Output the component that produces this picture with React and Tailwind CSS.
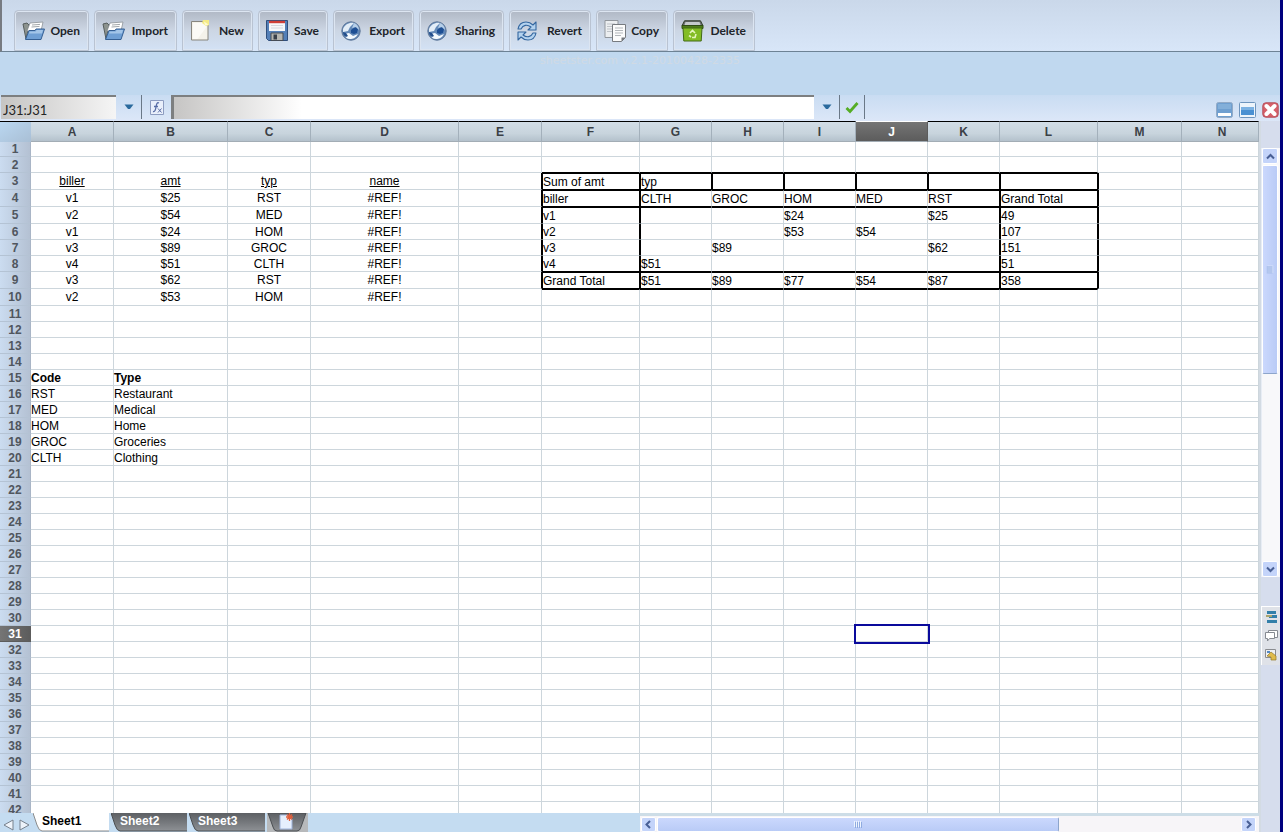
const tools = [
  { label: 'Open', icon: FolderIcon, size: 'w-[75px]' },
  { label: 'Import', icon: FolderIcon, size: 'w-[83px]' },
  { label: 'New', icon: PageIcon, size: 'w-[71px]' },
  { label: 'Save', icon: DiskIcon, size: 'w-[70px]' },
  { label: 'Export', icon: GlobeIcon, size: 'w-[81px]' },
  { label: 'Sharing', icon: GlobeIcon, size: 'w-[85px]' },
  { label: 'Revert', icon: RevertIcon, size: 'w-[82px]' },
  { label: 'Copy', icon: CopyIcon, size: 'w-[72px]' },
  { label: 'Delete', icon: BinIcon, size: 'w-[82px]' },
]

const columns = [
  { name: 'A', size: 'w-[83px]' },
  { name: 'B', size: 'w-[114px]' },
  { name: 'C', size: 'w-[83px]' },
  { name: 'D', size: 'w-[148px]' },
  { name: 'E', size: 'w-[83px]' },
  { name: 'F', size: 'w-[98px]' },
  { name: 'G', size: 'w-[72px]' },
  { name: 'H', size: 'w-[72px]' },
  { name: 'I', size: 'w-[72px]' },
  { name: 'J', size: 'w-[72px]' },
  { name: 'K', size: 'w-[72px]' },
  { name: 'L', size: 'w-[98px]' },
  { name: 'M', size: 'w-[84px]' },
  { name: 'N', size: 'pl-1' },
]

const rowData = {
  3: { A: 'biller', B: 'amt', C: 'typ', D: 'name', F: 'Sum of amt', G: 'typ' },
  4: { A: 'v1', B: '$25', C: 'RST', D: '#REF!', F: 'biller', G: 'CLTH', H: 'GROC', I: 'HOM', J: 'MED', K: 'RST', L: 'Grand Total' },
  5: { A: 'v2', B: '$54', C: 'MED', D: '#REF!', F: 'v1', I: '$24', K: '$25', L: '49' },
  6: { A: 'v1', B: '$24', C: 'HOM', D: '#REF!', F: 'v2', I: '$53', J: '$54', L: '107' },
  7: { A: 'v3', B: '$89', C: 'GROC', D: '#REF!', F: 'v3', H: '$89', K: '$62', L: '151' },
  8: { A: 'v4', B: '$51', C: 'CLTH', D: '#REF!', F: 'v4', G: '$51', L: '51' },
  9: { A: 'v3', B: '$62', C: 'RST', D: '#REF!', F: 'Grand Total', G: '$51', H: '$89', I: '$77', J: '$54', K: '$87', L: '358' },
  10: { A: 'v2', B: '$53', C: 'HOM', D: '#REF!' },
  15: { A: 'Code', B: 'Type' },
  16: { A: 'RST', B: 'Restaurant' },
  17: { A: 'MED', B: 'Medical' },
  18: { A: 'HOM', B: 'Home' },
  19: { A: 'GROC', B: 'Groceries' },
  20: { A: 'CLTH', B: 'Clothing' },
}

const rowNumbers = Array.from({ length: 42 }, (_, i) => i + 1)
const tallRows = [3, 4, 5, 9, 10]

function rowHeight(row) {
  if (row === 1) return 'h-[15px]'
  return tallRows.includes(row) ? 'h-[17px]' : 'h-4'
}

// heavy rule on the left edge of a pivot cell
function heavyLeft(row, col) {
  if (row < 3 || row > 9) return false
  if (col === 'F' || col === 'G' || col === 'L' || col === 'M') return true
  return row === 3 && 'HIJK'.includes(col)
}

// heavy rule on the top edge of a pivot cell
function heavyTop(row, col) {
  return [3, 4, 5, 9, 10].includes(row) && 'FGHIJKL'.includes(col)
}

function cellClass(row, col) {
  const next = String.fromCharCode(col.charCodeAt(0) + 1)
  const c = ['relative overflow-visible whitespace-nowrap p-0 leading-[14px]']
  c.push(heavyLeft(row, next) ? 'border-r border-r-black' : 'border-r border-r-[#cdd6dc]')
  c.push(heavyTop(row + 1, col) ? 'border-b border-b-black' : 'border-b border-b-[#cdd6dc]')
  if (heavyLeft(row, col)) c.push('border-l border-l-black')
  if (heavyTop(row, col)) c.push('border-t border-t-black')
  if (row <= 10 && 'ABCD'.includes(col)) c.push('text-center')
  if (row === 3 && 'ABCD'.includes(col)) c.push('underline')
  if (row === 15) c.push('font-bold')
  return c.join(' ')
}

function FolderIcon() {
  return (
    <svg width="23" height="20" viewBox="0 0 23 20">
      <path d="M1 3l4-1 2 2-3 14z" fill="#8d938e" stroke="#555d5c" />
      <path d="M8 2l13-1-2 9H5z" fill="#fff" stroke="#8a9196" strokeWidth=".8" />
      <path d="M10 4l8-.6M9.500 6l8-.6" stroke="#8b9094" strokeWidth=".8" />
      <path d="M7 9.500h6l1-1.500h8.500l-3.500 10.500H3.500z" fill="#6f9fd4" stroke="#355f93" />
      <path d="M7.600 10.500h6l1-1.500h6.400l-1 3.500H7z" fill="#a3c5e8" />
    </svg>
  )
}

function PageIcon() {
  return (
    <svg width="20" height="21" viewBox="0 0 20 21">
      <path d="M1.500 1.500h13l3.500 3v15.500H1.500z" fill="#f4f2ea" stroke="#88867f" />
      <path d="M3 3h10l3.500 4-9 12H3z" fill="#fbfaf6" />
      <path d="M13 0h6v5l-3 1-4-3z" fill="#f5eb86" />
      <path d="M14 1.500l1 4 3.500-1z" fill="#fffbd0" />
    </svg>
  )
}

function DiskIcon() {
  return (
    <svg width="22" height="21" viewBox="0 0 22 21">
      <path d="M.5.5h21v20H2.500l-2-2z" fill="#5480b8" stroke="#304f7d" />
      <path d="M3 1h16v10H3z" fill="#f7f8fa" />
      <path d="M3 .8h16v2.400H3z" fill="#cf3f38" />
      <path d="M5 5.500h12M5 8h12" stroke="#d4d8df" />
      <path d="M5 13h12v7.500H5z" fill="#b5b5b0" stroke="#464c55" />
      <path d="M7.500 14.500h3.500v5H7.500z" fill="#39404a" />
    </svg>
  )
}

function GlobeIcon() {
  return (
    <svg width="20" height="20" viewBox="0 0 20 20">
      <circle cx="10" cy="10" r="9.200" fill="#6389b8" stroke="#5d7596" />
      <path d="M2 8c2-5 7-7 11-6l-4 4-2 4-5 1z" fill="#e3edf7" />
      <path d="M10 9l4-3 3 2-1 4-3 1-3-1z" fill="#1e4f94" />
      <path d="M3 13l5-1 4 3 5-2c-2 4-5 5-8 5s-5-2-6-5z" fill="#f4f9fd" />
      <path d="M2 11l3 1 2 3-2 1c-2-1-3-3-3-5z" fill="#244f8c" />
      <path d="M13 2c3 1 5 4 5 7l-3-3-4 1z" fill="#b6cfe9" />
    </svg>
  )
}

function RevertIcon() {
  return (
    <svg width="20" height="20" viewBox="0 0 20 20" fill="#b3d2ef" stroke="#33669f" strokeWidth="1.100" strokeLinejoin="round">
      <path d="M1 8c1-5 4-7 8-7 3 0 5 1 7 3l3-3v8h-8l3-3c-4-3-8-2-10 2z" />
      <path d="M19 12c-1 5-4 7-8 7-3 0-5-1-7-3l-3 3v-8h8l-3 3c4 3 8 2 10-2z" />
    </svg>
  )
}

function CopyIcon() {
  return (
    <svg width="23" height="22" viewBox="0 0 23 22">
      <path d="M1 .5h13v17H1z" fill="#eceef0" stroke="#92979d" />
      <path d="M3 4h8M3 6.500h8M3 9h5M3 11.500h5" stroke="#bfc3c8" />
      <path d="M8.500 4.500h13v13l-4 4h-9z" fill="#fcfcfc" stroke="#777b80" />
      <path d="M11 8h8M11 10.500h8M11 13h8M11 15.500h6" stroke="#b3b7bb" />
      <path d="M17.500 21.500v-4h4z" fill="#777b80" />
    </svg>
  )
}

function BinIcon() {
  return (
    <svg width="23" height="22" viewBox="0 0 23 22">
      <path d="M3.500.8h16l2.500 5H1z" fill="#6c7070" stroke="#2f3a28" />
      <path d="M4.500 2h14l1 3h-16z" fill="#c4c9cb" />
      <path d="M1 5.500h21v3H1z" fill="#4d7c19" stroke="#2f4d13" />
      <path d="M2 8h19l-.8 13H2.800z" fill="#83bd25" stroke="#426a15" />
      <path d="M9 13l2.500-2.500L14 13M15 14l-1 3.500h-3M10 17l-2-1.500" fill="none" stroke="#e5f5bd" strokeWidth="1.600" />
    </svg>
  )
}

function DownArrow() {
  return (
    <svg width="10" height="6" viewBox="0 0 10 6">
      <path d="M.5.5h9L6 5H4z" fill="#2b6a9d" />
    </svg>
  )
}

function Chevron({ d }) {
  return (
    <svg width="9" height="9" viewBox="0 0 9 9" fill="none" stroke="#485f94" strokeWidth="2">
      <path d={d} />
    </svg>
  )
}

function Toolbar() {
  return (
    <header className="flex h-[52px] shrink-0 gap-[5px] border-b border-l-2 border-b-[#6d8294] border-l-[#777b82] bg-linear-to-b from-[#cad8ea] to-[#d8e6f8] pt-2.5 pl-3">
      {tools.map(({ label, icon: Icon, size }) => (
        <button
          key={label}
          className={`flex h-[41px] shrink-0 items-center justify-between rounded-t border border-[#b9c3d2] bg-linear-to-b from-[#b0b8c5] via-[#ccd6e4] via-50% to-[#d3e2f5] pr-2 pl-[7px] text-[12px] font-bold text-[#20242a] shadow-[inset_0_0_0_1px_#dce5f1] ${size}`}
        >
          <Icon />
          {label}
        </button>
      ))}
    </header>
  )
}

function FormulaBar() {
  return (
    <div className="flex h-[26px] shrink-0 bg-linear-to-b from-[#c9dcf2] to-[#dce7f8] pb-0.5 pl-px">
      <input
        aria-label="Cell range"
        defaultValue="J31:J31"
        className="h-[24px] w-[115px] border-t-2 border-[#7d7f80] bg-linear-to-r from-[#c6c5c4] to-[#f5f5f5] pt-1 pl-0.5 text-[13px] text-[#252525] outline-none"
      />
      <button aria-label="Choose range" className="flex w-[26px] items-center justify-center border-r border-[#6a7887]">
        <DownArrow />
      </button>
      <button aria-label="Insert function" className="flex w-[29px] items-center justify-center">
        <svg width="14" height="15" viewBox="0 0 14 15">
          <path d="M.5.5h13v14H.5z" fill="#e9effb" stroke="#8d9cc0" />
          <path d="M9 3c-2-1-2.500 1-3 4s-1 5-3 4.500M4 6.500h4" fill="none" stroke="#596da6" strokeWidth="1.300" />
          <path d="M8 8.500l3.500 4M11.500 8.500L8 12.500" stroke="#596da6" />
        </svg>
      </button>
      <input
        aria-label="Formula"
        className="h-[24px] w-[643px] border-t-2 border-l-[3px] border-[#7d7f80] bg-linear-to-r from-[#c6c5c4] to-white to-20% px-1 text-[13px] outline-none"
      />
      <button aria-label="Expand formula" className="flex w-[26px] items-center justify-center border-r border-[#6a7887]">
        <DownArrow />
      </button>
      <button aria-label="Accept" className="flex w-[25px] items-center justify-center border-r border-[#6a7887]">
        <svg width="14" height="13" viewBox="0 0 14 13">
          <path d="M1.500 7L5 10.500 12.500 2" fill="none" stroke="#55ad25" strokeWidth="2.800" />
        </svg>
      </button>
      <div className="ml-auto flex items-center gap-1.5 pt-[5px] pr-px">
        <button aria-label="Minimize">
          <svg width="17" height="16" viewBox="0 0 17 16">
            <rect x=".5" y=".5" width="16" height="15" rx="2" fill="#6f9fd0" stroke="#92aac6" />
            <path d="M2 2h13v5H2z" fill="#83afd9" />
            <path d="M2 11h13v3H2z" fill="#fff" />
          </svg>
        </button>
        <button aria-label="Maximize">
          <svg width="17" height="16" viewBox="0 0 17 16">
            <rect x=".5" y=".5" width="16" height="15" rx="1" fill="#edf4fb" stroke="#6d94bd" />
            <path d="M2 5h13v8H2z" fill="#4a90d2" />
            <path d="M2 5h13v3H2z" fill="#7bb1e2" />
          </svg>
        </button>
        <button aria-label="Close">
          <svg width="17" height="16" viewBox="0 0 17 16">
            <rect x=".8" y=".8" width="15.400" height="14.400" rx="3" fill="#d6606a" stroke="#b5505c" />
            <path d="M4.500 4l8 8M12.500 4l-8 8" stroke="#fff" strokeWidth="4" strokeLinecap="round" />
          </svg>
        </button>
      </div>
    </div>
  )
}

function Grid() {
  return (
    <div className="min-h-0 flex-1 overflow-hidden bg-white">
      <table className="w-full table-fixed border-separate border-spacing-0 text-[12px] text-black">
        <thead>
          <tr className="h-[21px]">
            <th className="w-[31px] border-t border-black bg-linear-to-br from-[#bad7f1] to-[#a9bfd5] p-0" />
            {columns.map(({ name, size }) => (
              <th
                key={name}
                className={`border-t border-r border-b border-b-[#a3adb5] py-0 leading-[14px] font-bold ${size} ${
                  name === 'J'
                    ? 'border-t-white border-r-[#5c5c5c] bg-linear-to-b from-[#757575] to-[#5c5c5c] text-white'
                    : 'border-t-black border-r-[#a3b0bb] bg-linear-to-b from-[#d2dde6] via-[#c8d4dd] via-60% to-[#b4c1cc] text-[#3b4046]'
                }`}
              >
                {name}
              </th>
            ))}
          </tr>
        </thead>
        <tbody>
          {rowNumbers.map((row) => (
            <tr key={row} className={rowHeight(row)}>
              <th
                className={`border-r border-b p-0 text-[12px] leading-[14px] font-bold ${
                  row === 31
                    ? 'border-[#5c5c5c] bg-linear-to-r from-[#757575] to-[#5c5c5c] text-white'
                    : 'border-r-[#a9b5c6] border-b-[#b4c3d4] bg-linear-to-r from-[#cbdcf0] to-[#b4c1d3] text-[#50565e]'
                }`}
              >
                {row}
              </th>
              {columns.map(({ name }) => (
                <td key={name} className={cellClass(row, name)}>
                  {rowData[row]?.[name]}
                  {row === 31 && name === 'J' && (
                    <div className="absolute -top-0.5 -right-[3px] -bottom-[3px] -left-0.5 z-10 border-2 border-[#0a0a9c]" />
                  )}
                </td>
              ))}
            </tr>
          ))}
        </tbody>
      </table>
    </div>
  )
}

function SheetTab({ label, active }) {
  return (
    <button className={`relative h-[19px] w-[78px] pb-[3px] pl-[9px] text-left text-[12px] leading-4 font-bold ${active ? 'text-black' : 'text-white'}`}>
      <svg className="absolute inset-0" width="78" height="19" viewBox="0 0 78 19">
        <defs>
          <linearGradient id="tabShade" x1="0" y1="0" x2="0" y2="1">
            <stop offset="0" stopColor="#5d6064" />
            <stop offset=".5" stopColor="#74777b" />
            <stop offset="1" stopColor="#8e9195" />
          </linearGradient>
        </defs>
        <path d="M0 0h76v18H9q-3 0-5-6z" fill={active ? '#fff' : 'url(#tabShade)'} />
        <path d="M0 0l4 12q2 6 5 6h67" fill="none" stroke={active ? '#8b8b8b' : '#4b4e52'} />
      </svg>
      <span className="relative">{label}</span>
    </button>
  )
}

function BottomBar() {
  return (
    <div className="flex h-[19px] shrink-0 bg-[#c4dcf1]">
      <div className="flex w-[640px] shrink-0">
        <div className="flex w-[33px] items-center gap-[5px] pt-1 pl-[3px]">
          <button aria-label="Previous sheet">
            <svg width="11" height="12" viewBox="0 0 11 12">
              <path d="M10 1v10L1 6z" fill="#edf3fa" stroke="#77818d" />
            </svg>
          </button>
          <button aria-label="Next sheet">
            <svg width="11" height="12" viewBox="0 0 11 12">
              <path d="M1 1v10l9-5z" fill="#edf3fa" stroke="#77818d" />
            </svg>
          </button>
        </div>
        <SheetTab label="Sheet1" active />
        <SheetTab label="Sheet2" />
        <SheetTab label="Sheet3" />
        <button aria-label="Add sheet">
          <svg width="41" height="19" viewBox="0 0 41 19">
            <path d="M0 0h41v19H0z" fill="#b7b9bb" />
            <path d="M1 0h38l-5 14q-1 4-4 4H10q-3 0-4-4z" fill="url(#tabShade)" stroke="#4b4e52" />
            <path d="M13 2h8l4 4v10H13z" fill="#e6effd" stroke="#9eb2d8" />
            <path d="M22.500 0v8M19 4h7M20 1.500l5 5M25 1.500l-5 5" stroke="#e3603c" strokeWidth="1.300" />
          </svg>
        </button>
      </div>
      <div className="flex min-w-0 flex-1 gap-px border-t-[3px] border-[#cddde7] bg-[#f7f5f8] pt-px pr-[3px] pl-px">
        <button aria-label="Scroll left" className="flex w-[15px] items-center justify-center rounded-xs border border-white bg-[#c4d4fa]">
          <Chevron d="M6 1L2.500 4.500 6 8" />
        </button>
        <div className="flex flex-1">
          <div className="flex w-[69%] items-center justify-center gap-px rounded-xs border border-white border-r-[#8da5cb] bg-linear-to-b from-[#cbd8fd] to-[#b9cbf6]">
            <Grip />
          </div>
        </div>
        <button aria-label="Scroll right" className="flex w-[15px] items-center justify-center rounded-xs border border-white bg-[#c4d4fa]">
          <Chevron d="M3 1l3.500 3.500L3 8" />
        </button>
      </div>
    </div>
  )
}

function Grip() {
  return (
    <svg width="8" height="7" viewBox="0 0 8 7">
      <path d="M.5 0v6M2.500 0v6M4.500 0v6M6.500 0v6" stroke="#eef4fe" />
      <path d="M1.500 1v6M3.500 1v6M5.500 1v6M7.500 1v6" stroke="#8fabe0" />
    </svg>
  )
}

function SideBar() {
  return (
    <aside className="flex w-[21px] shrink-0 flex-col border-l-2 border-[#d3dbe3] bg-[#d6dded] pt-[27px] pb-[167px]">
      <div className="flex min-h-0 flex-1 flex-col gap-px border-l border-[#e8edf5] bg-[#f8f8fa] pr-0.5">
        <button aria-label="Scroll up" className="flex h-4 shrink-0 items-center justify-center rounded-xs border border-white bg-[#c4d4fa]">
          <Chevron d="M1 6.500L4.500 3 8 6.500" />
        </button>
        <div className="min-h-0 flex-1">
          <div className="flex h-[53%] items-center justify-center rounded-xs border border-white border-b-[#8da5cb] bg-linear-to-r from-[#cbd8fd] to-[#b9cbf6]">
            <div className="rotate-90">
              <Grip />
            </div>
          </div>
        </div>
        <button aria-label="Scroll down" className="flex h-4 shrink-0 items-center justify-center rounded-xs border border-white bg-[#c4d4fa]">
          <Chevron d="M1 2.500L4.500 6 8 2.500" />
        </button>
      </div>
      <div className="mt-[29px] flex h-[59px] shrink-0 flex-col items-center justify-around border-t border-l border-white bg-[#dfe2e8]">
        <button aria-label="Rows">
          <svg width="11" height="12" viewBox="0 0 11 12">
            <path d="M1 0h9v3H1zM3 4h8v3H3zM1 9h10v3H1z" fill="#327fa9" />
            <path d="M0 4h6v2H0z" fill="#a9a36d" />
          </svg>
        </button>
        <button aria-label="Comments">
          <svg width="13" height="12" viewBox="0 0 13 12" fill="#fff" stroke="#858a91">
            <path d="M3.500.5h9v7h-9z" />
            <path d="M.5 2.500h9v6h-5l-2 2.500v-2.500h-2z" />
          </svg>
        </button>
        <button aria-label="Images">
          <svg width="12" height="12" viewBox="0 0 12 12">
            <path d="M.5.5h10v8H.5z" fill="#eef0f3" stroke="#8a8c90" />
            <path d="M2 2h3v2H2z" fill="#5589c4" />
            <path d="M2 7l4-4 5 4v4H6V8z" fill="#dfbb4b" stroke="#94782a" strokeWidth=".7" />
          </svg>
        </button>
      </div>
    </aside>
  )
}

export default function App() {
  return (
    <div className="flex h-screen flex-col overflow-hidden border-r-[3px] border-[#00007e] bg-[#c0d8ef] font-['Lato','Liberation_Sans',sans-serif]">
      <Toolbar />
      <div className="h-[43px] shrink-0 pt-px text-center font-['DejaVu_Sans',sans-serif] text-[11px] leading-4 text-[#d0dae4]">
        sheetster.com v.2.1-20100428-2335
      </div>
      <FormulaBar />
      <main className="flex min-h-0 flex-1 font-['Liberation_Sans',Arial,sans-serif]">
        <div className="flex min-w-0 flex-1 flex-col">
          <Grid />
          <BottomBar />
        </div>
        <SideBar />
      </main>
    </div>
  )
}
